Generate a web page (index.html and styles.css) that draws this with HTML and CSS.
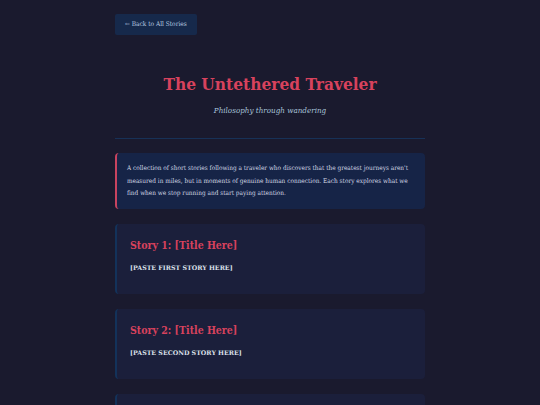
FILE: index.html
```html
<!DOCTYPE html>
<html lang="en">
<head>
<meta charset="utf-8">
<title>The Untethered Traveler</title>
<link rel="stylesheet" href="styles.css">
</head>
<body>
<div class="container">
  <nav class="nav">
    <a class="back" href="#">← Back to All Stories</a>
  </nav>
  <header class="header">
    <h1 class="title">The Untethered Traveler</h1>
    <p class="subtitle">Philosophy through wandering</p>
  </header>
  <div class="intro">
    A collection of short stories following a traveler who discovers that the greatest journeys aren't measured in miles, but in moments of genuine human connection. Each story explores what we find when we stop running and start paying attention.
  </div>
  <article class="story">
    <h2 class="story-title">Story 1: [Title Here]</h2>
    <p class="story-body">[PASTE FIRST STORY HERE]</p>
  </article>
  <article class="story">
    <h2 class="story-title">Story 2: [Title Here]</h2>
    <p class="story-body">[PASTE SECOND STORY HERE]</p>
  </article>
  <article class="story">
    <h2 class="story-title">Story 3: [Title Here]</h2>
    <p class="story-body">[PASTE THIRD STORY HERE]</p>
  </article>
</div>
</body>
</html>
```
FILE: styles.css
```css
html, body {
  margin: 0;
  padding: 0;
  background: #1a1a2e;
}
body {
  font-family: "DejaVu Serif", "Liberation Serif", serif;
  font-stretch: condensed;
  color: #d6dae6;
}
.container {
  width: 310px;
  margin: 0 auto;
  padding-top: 14px;
}
.nav {
  display: flex;
}
.back {
  display: block;
  height: 21px;
  line-height: 21px;
  padding: 0 10px;
  background: #16294b;
  border-radius: 2px;
  color: #b9cce0;
  font-size: 6.5px;
  text-decoration: none;
}
.header {
  text-align: center;
  padding-top: 38px;
  padding-bottom: 22px;
  border-bottom: 1px solid #173157;
  margin-bottom: 14px;
}
.title {
  margin: 0;
  font-size: 17.2px;
  line-height: 23px;
  font-weight: bold;
  color: #d8425d;
}
.subtitle {
  margin: 9px 0 0;
  font-size: 8px;
  line-height: 11px;
  font-style: italic;
  color: #a9c3d9;
}
.intro {
  background: #162447;
  border-left: 2px solid #c8435f;
  border-radius: 4px;
  padding: 9px 12px 9px 10px;
  font-size: 6.45px;
  line-height: 12.5px;
  color: #d3d8e4;
  margin-bottom: 15px;
}
.story {
  background: #1b1f3b;
  border-left: 2px solid #13325a;
  border-radius: 4px;
  padding: 14px 13px 21px;
  margin-bottom: 15px;
}
.story-title {
  margin: 0;
  font-size: 10.5px;
  line-height: 14px;
  font-weight: bold;
  color: #d8425d;
}
.story-body {
  margin: 11px 0 0;
  font-size: 6.3px;
  font-stretch: normal;
  line-height: 10px;
  font-weight: bold;
  color: #dde1ea;
}
```
